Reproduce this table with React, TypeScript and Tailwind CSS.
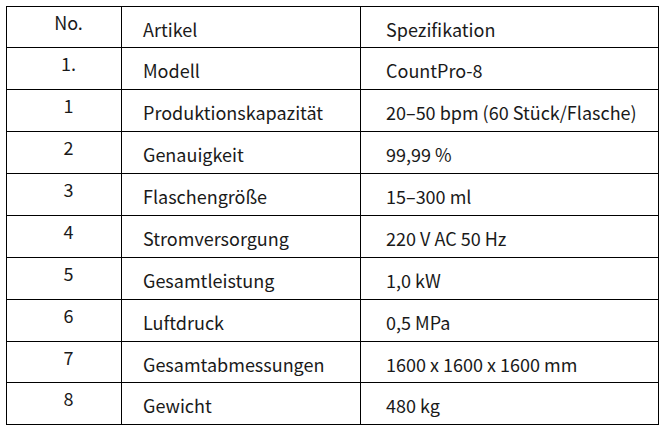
const rows: [string, string, string][] = [
  ['1.', 'Modell', 'CountPro-8'],
  ['1', 'Produktionskapazität', '20–50 bpm (60 Stück/Flasche)'],
  ['2', 'Genauigkeit', '99,99 %'],
  ['3', 'Flaschengröße', '15–300 ml'],
  ['4', 'Stromversorgung', '220 V AC 50 Hz'],
  ['5', 'Gesamtleistung', '1,0 kW'],
  ['6', 'Luftdruck', '0,5 MPa'],
  ['7', 'Gesamtabmessungen', '1600 x 1600 x 1600 mm'],
  ['8', 'Gewicht', '480 kg'],
]

function Row({ cells, short }: { cells: [string, string, string]; short?: boolean }) {
  const h = short ? 'h-[41px]' : 'h-[42px]'
  return (
    <>
      <div className={`${h} border-r border-b border-black text-center pl-[9px] pt-[3px]`}>{cells[0]}</div>
      <div className={`${h} border-r border-b border-black pl-[21px] pt-[10px] whitespace-nowrap`}>{cells[1]}</div>
      <div className={`${h} border-r border-b border-black pl-[25px] pt-[10px] whitespace-nowrap`}>{cells[2]}</div>
    </>
  )
}

export default function App() {
  return (
    <div
      className="w-[667px] h-[432px] bg-white pt-[6px] pl-[6px] text-[18px] leading-[24px] text-[#1a1a1a]"
      style={{ fontFamily: '"Noto Sans CJK SC", "Noto Sans", sans-serif' }}
    >
      <div className="grid grid-cols-[115px_239px_298px] w-[653px] border-l border-t border-black">
        <Row cells={['No.', 'Artikel', 'Spezifikation']} short />
        {rows.map((r, i) => (
          <Row key={r[1]} cells={r} short={i === 7} />
        ))}
      </div>
    </div>
  )
}
